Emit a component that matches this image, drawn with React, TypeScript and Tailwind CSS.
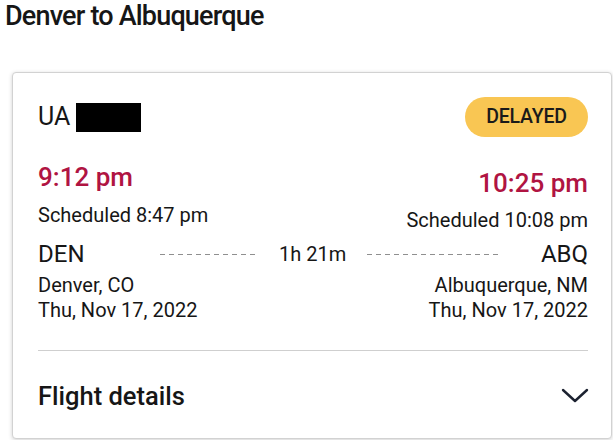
export default function App() {
  return (
    <div className="h-[440px] w-[613px] overflow-hidden bg-white font-['Roboto',sans-serif] text-[#161616]">
      <h1 className="pl-[5px] text-[27px] font-medium leading-[32px] tracking-[-0.03em]">Denver to Albuquerque</h1>

      <div className="ml-[12px] mt-[40px] w-[600px] rounded-[4px] border border-[#d2d2d2] bg-white pb-[27px] pl-[25px] pr-[23px] pt-[24px] shadow-[0_1px_4px_rgba(0,0,0,0.18)]">
        {/* flight number + status */}
        <div className="flex items-center justify-between">
          <div className="flex items-center gap-[6px]">
            <span className="text-[25px] leading-[30px]">UA</span>
            <span className="h-[29px] w-[65px] bg-black" />
          </div>
          <span className="flex h-[40px] w-[123px] items-center justify-center rounded-full bg-[#f9c653] text-[19.5px] font-medium tracking-[-0.01em] text-[#1a1a1a]">
            DELAYED
          </span>
        </div>

        {/* times */}
        <div className="mt-[24px] flex justify-between">
          <div className="flex flex-col">
            <span className="text-[26px] font-medium leading-[32px] text-[#b01442]">9:12 pm</span>
            <span className="mt-[10px] text-[20px] leading-[24px]">Scheduled 8:47 pm</span>
          </div>
          <div className="flex flex-col items-end pt-[6px]">
            <span className="text-[26px] font-medium leading-[32px] text-[#b01442]">10:25 pm</span>
            <span className="mt-[9px] text-[20px] leading-[24px]">Scheduled 10:08 pm</span>
          </div>
        </div>

        {/* route */}
        <div className="mt-[8px] flex items-center">
          <span className="w-[122px] text-[24px] leading-[28px]">DEN</span>
          <span className="h-px w-[98px] bg-[repeating-linear-gradient(90deg,#8f8f8f_0_5px,transparent_5px_9px)]" />
          <span className="px-[21px] text-[20px] leading-[28px]">1h 21m</span>
          <span className="h-px flex-1 bg-[repeating-linear-gradient(90deg,#8f8f8f_0_5px,transparent_5px_9px)]" />
          <span className="w-[88px] text-right text-[24px] leading-[28px]">ABQ</span>
        </div>

        <div className="mt-[5px] flex justify-between text-[20px] leading-[25px]">
          <div className="flex flex-col">
            <span>Denver, CO</span>
            <span>Thu, Nov 17, 2022</span>
          </div>
          <div className="flex flex-col items-end">
            <span>Albuquerque, NM</span>
            <span>Thu, Nov 17, 2022</span>
          </div>
        </div>

        <div className="mt-[27px] h-px bg-[#cfcfcf]" />

        <div className="mt-[30px] flex items-center justify-between">
          <span className="text-[25.5px] font-medium leading-[30px]">Flight details</span>
          <svg width="28" height="16" viewBox="0 0 28 16" fill="none" className="mr-[-1px]">
            <path d="M2 2 L14 13 L26 2" stroke="#1c2230" strokeWidth="2.4" strokeLinecap="round" strokeLinejoin="round" />
          </svg>
        </div>
      </div>
    </div>
  );
}
